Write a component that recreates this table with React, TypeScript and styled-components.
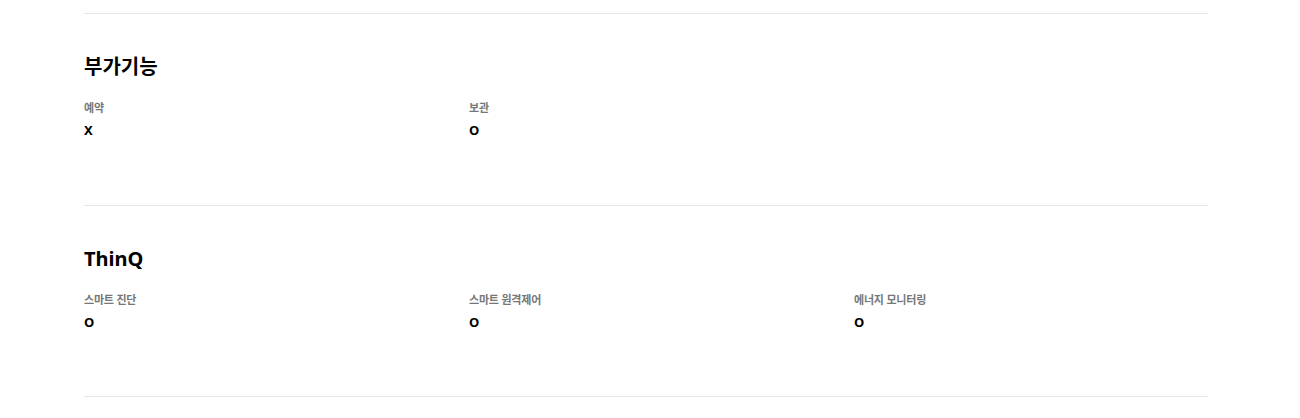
import React from 'react';
import styled, { createGlobalStyle } from 'styled-components';

const GlobalStyle = createGlobalStyle`
	body {
		margin: 0;
		background: #fff;
		font-family: 'Noto Sans', 'Noto Sans CJK KR', sans-serif;
		color: #000;
	}
`;

const Page = styled.div`
	width: 1124px;
	margin-left: 84px;
	padding-top: 13px;
`;

const Section = styled.section`
	border-top: 1px solid #e6e6e6;
	padding: 39px 0 65px;

	&:last-child {
		border-bottom: 1px solid #e6e6e6;
		padding-bottom: 64px;
	}
`;

const SectionTitle = styled.h2`
	margin: 0 0 18px;
	font-size: 20px;
	line-height: 28px;
	font-weight: 700;
`;

const SpecGrid = styled.dl`
	display: grid;
	grid-template-columns: 385px 385px 1fr;
	margin: 0;
`;

const SpecItem = styled.div`
	display: flex;
	flex-direction: column;
	gap: 3px;
`;

const SpecLabel = styled.dt`
	font-size: 11px;
	line-height: 18px;
	font-weight: 600;
	color: #777;
	letter-spacing: -0.2px;
`;

const SpecValue = styled.dd`
	margin: 0;
	font-size: 13px;
	line-height: 20px;
	font-weight: 700;
`;

type Spec = { label: string; value: string };

const sections: { title: string; specs: Spec[] }[] = [
	{
		title: '부가기능',
		specs: [
			{ label: '예약', value: 'X' },
			{ label: '보관', value: 'O' },
		],
	},
	{
		title: 'ThinQ',
		specs: [
			{ label: '스마트 진단', value: 'O' },
			{ label: '스마트 원격제어', value: 'O' },
			{ label: '에너지 모니터링', value: 'O' },
		],
	},
];

export default function App() {
	return (
		<>
			<GlobalStyle />
			<Page>
				{sections.map((section) => (
					<Section key={section.title}>
						<SectionTitle>{section.title}</SectionTitle>
						<SpecGrid>
							{section.specs.map((spec) => (
								<SpecItem key={spec.label}>
									<SpecLabel>{spec.label}</SpecLabel>
									<SpecValue>{spec.value}</SpecValue>
								</SpecItem>
							))}
						</SpecGrid>
					</Section>
				))}
			</Page>
		</>
	);
}
